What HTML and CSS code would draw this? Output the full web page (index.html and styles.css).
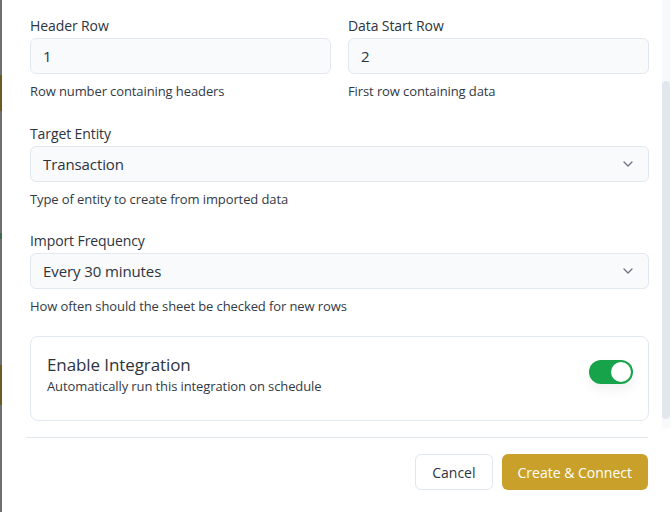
FILE: index.html
```html
<!DOCTYPE html>
<html lang="en">
<head>
    <meta charset="UTF-8">
    <meta name="viewport" content="width=device-width, initial-scale=1.0">
    <title>New Integration</title>
    <link rel="stylesheet" href="styles.css">
</head>
<body>
    <div class="backdrop">
        <div class="bd-gap" style="height: 75px"></div>
        <div class="bd-gold" style="height: 36px"></div>
        <div class="bd-gap" style="height: 122px"></div>
        <div class="bd-green" style="height: 6px"></div>
        <div class="bd-gap" style="height: 126px"></div>
        <div class="bd-gold" style="height: 40px"></div>
    </div>

    <div class="modal">
        <div class="modal-scroll">
            <div class="modal-body">
                <div class="form-row">
                    <div class="form-group">
                        <label for="headerRow">Header Row</label>
                        <input type="text" id="headerRow" value="1">
                        <p class="hint">Row number containing headers</p>
                    </div>
                    <div class="form-group">
                        <label for="dataRow">Data Start Row</label>
                        <input type="text" id="dataRow" value="2">
                        <p class="hint">First row containing data</p>
                    </div>
                </div>

                <div class="form-group">
                    <label for="entity">Target Entity</label>
                    <div class="select">
                        <span>Transaction</span>
                        <svg width="10" height="6" viewBox="0 0 10 6"><path d="M1 1l4 4 4-4" fill="none" stroke="#6b7280" stroke-width="1.3" stroke-linecap="round" stroke-linejoin="round"/></svg>
                    </div>
                    <p class="hint">Type of entity to create from imported data</p>
                </div>

                <div class="form-group group-tight">
                    <label for="freq">Import Frequency</label>
                    <div class="select">
                        <span>Every 30 minutes</span>
                        <svg width="10" height="6" viewBox="0 0 10 6"><path d="M1 1l4 4 4-4" fill="none" stroke="#6b7280" stroke-width="1.3" stroke-linecap="round" stroke-linejoin="round"/></svg>
                    </div>
                    <p class="hint">How often should the sheet be checked for new rows</p>
                </div>

                <div class="switch-card">
                    <div>
                        <div class="switch-title">Enable Integration</div>
                        <div class="switch-desc">Automatically run this integration on schedule</div>
                    </div>
                    <div class="toggle"><div class="knob"></div></div>
                </div>
            </div>
            <div class="scrollbar"><div class="thumb"></div></div>
        </div>

        <div class="modal-footer">
            <button class="btn btn-outline">Cancel</button>
            <button class="btn btn-primary">Create &amp; Connect</button>
        </div>
    </div>
</body>
</html>
```

FILE: styles.css
```css
body { margin: 0; display: flex; height: 512px; overflow: hidden; background: #6e6f70; font-family: "Open Sans", Arial, sans-serif; color: #2d3440; }
.backdrop { width: 2px; display: flex; flex-direction: column; }
.bd-gold { background: #6a5a24; }
.bd-green { background: #3f6a4c; }
.modal { flex: 1; background: #fff; display: flex; flex-direction: column; }
.modal-scroll { display: flex; height: 428px; }
.modal-body { flex: 1; padding: 16px 13px 0 28px; }
.scrollbar { width: 8px; margin-right: 2px; background: #f8f9fb; padding-top: 81px; }
.thumb { height: 338px; background: #e2e7ef; border-radius: 4px; }
.form-row { display: grid; grid-template-columns: 1fr 1fr; gap: 17px; }
.form-group { margin-bottom: 24px; }
.form-group.group-tight { margin-top: -1px; }
label { display: block; font-size: 14px; line-height: 20px; margin-bottom: 2px; color: #2d3440; letter-spacing: -0.1px; }
input, .select { box-sizing: border-box; width: 100%; height: 36px; padding: 0 12px; background: #f9fafb; border: 1px solid #e2e8f0; border-radius: 6px; font-family: inherit; font-size: 15px; color: #2d3440; letter-spacing: -0.1px; }
.select { display: flex; align-items: center; justify-content: space-between; padding-right: 15px; }
.hint { margin: 8px 0 0; font-size: 13px; line-height: 18px; color: #333a45; letter-spacing: -0.1px; }
.switch-card { display: flex; align-items: center; justify-content: space-between; margin-top: -3px; padding: 16px 15px 25px 16px; border: 1px solid #e2e8f0; border-radius: 8px; }
.switch-title { font-size: 17px; line-height: 24px; color: #2d3440; letter-spacing: -0.1px; }
.switch-desc { font-size: 13px; line-height: 18px; color: #333a45; letter-spacing: -0.1px; }
.toggle { width: 44px; height: 24px; border-radius: 12px; background: #16a34a; display: flex; justify-content: flex-end; align-items: center; padding: 0 2px; box-sizing: border-box; margin-top: -4px; box-shadow: 0 6px 12px rgba(0, 0, 0, 0.06); }
.knob { width: 20px; height: 20px; border-radius: 50%; background: #fff; }
.modal-footer { display: flex; justify-content: flex-end; gap: 9px; margin: 9px 24px 0 24px; padding-top: 16px; border-top: 1px solid #e2e8f0; }
.btn { height: 36px; padding: 0 16px; border-radius: 6px; font-family: inherit; font-size: 14px; cursor: pointer; }
.btn-outline { background: #fff; border: 1px solid #e2e8f0; color: #2d3440; }
.btn-primary { background: #c9a12a; border: none; color: #fff; }
```
